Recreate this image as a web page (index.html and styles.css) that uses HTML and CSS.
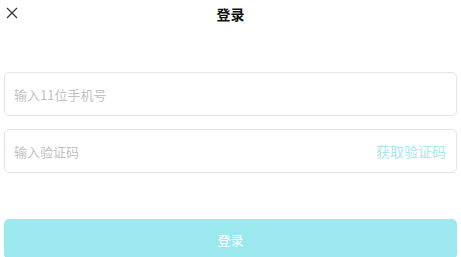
FILE: index.html
```html
<!DOCTYPE html>
<html lang="zh">
<head>
<meta charset="utf-8">
<link rel="stylesheet" href="styles.css">
</head>
<body>
<div class="page">
  <header class="nav">
    <span class="close">
      <svg width="12" height="12" viewBox="0 0 12 12"><path d="M1 1L11 11M11 1L1 11" stroke="#333" stroke-width="1.2" fill="none"/></svg>
    </span>
    <h1 class="title">登录</h1>
  </header>
  <form class="form">
    <div class="field"><span class="placeholder">输入11位手机号</span></div>
    <div class="field"><span class="placeholder">输入验证码</span><span class="code">获取验证码</span></div>
    <button type="button" class="submit">登录</button>
  </form>
</div>
</body>
</html>
```
FILE: styles.css
```css
html, body {
  margin: 0;
  padding: 0;
  background: #fff;
  font-family: "Noto Sans CJK SC", "Noto Sans", sans-serif;
}
.page {
  padding: 0 4px;
}
.nav {
  height: 28px;
  display: flex;
  align-items: center;
  justify-content: center;
  position: relative;
}
.close {
  position: absolute;
  left: 2px;
  top: 7px;
  width: 12px;
  height: 12px;
  display: flex;
}
.title {
  margin: 0;
  font-size: 14px;
  font-weight: bold;
  color: #111;
  line-height: 28px;
}
.form {
  margin-top: 44px;
  display: flex;
  flex-direction: column;
}
.field {
  height: 42px;
  border: 1px solid #e4e4e4;
  border-radius: 5px;
  display: flex;
  align-items: center;
  justify-content: space-between;
  padding: 0 10px 0 9px;
  margin-bottom: 13px;
}
.placeholder {
  font-size: 13px;
  color: #c2c2c2;
}
.code {
  font-size: 14px;
  color: #a6e8ee;
}
.submit {
  margin-top: 33px;
  height: 40px;
  border: none;
  border-radius: 5px;
  background: #9be9ee;
  color: #fff;
  font-family: inherit;
  font-size: 13px;
  padding: 0;
}
```
